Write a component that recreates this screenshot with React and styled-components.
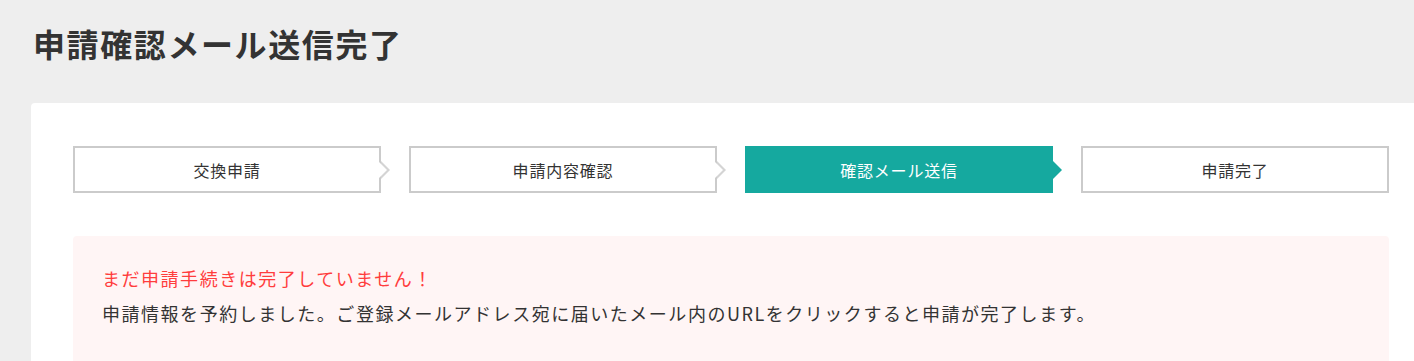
import React from 'react';
import styled, { createGlobalStyle } from 'styled-components';

const GlobalStyle = createGlobalStyle`
  html, body {
    margin: 0;
    padding: 0;
    background: #eeeeee;
    overflow: hidden;
  }

  body {
    font-family: 'Noto Sans CJK JP', 'Noto Sans', sans-serif;
    color: #333;
  }
`;

const StyledPage = styled.div`
  width: 1500px;
`;

const StyledTitle = styled.h1`
  margin: 0;
  padding: 23px 0 0 33px;
  font-size: 32px;
  line-height: 40px;
  font-weight: 700;
  letter-spacing: 0.05em;
  color: #333;
`;

const StyledCard = styled.section`
  box-sizing: border-box;
  width: 1400px;
  margin: 40px 0 0 31px;
  padding: 43px 42px 40px;
  background: #fff;
  border-radius: 4px;
`;

const StyledSteps = styled.ol`
  display: grid;
  grid-template-columns: repeat(4, 308px);
  grid-gap: 28px;
  margin: 0;
  padding: 0;
  list-style: none;
`;

const StyledStep = styled.li`
  position: relative;
  box-sizing: border-box;
  height: 47px;
  display: flex;
  align-items: center;
  justify-content: center;
  font-size: 16px;
  letter-spacing: 0.05em;
  color: ${({ active }) => (active ? '#fff' : '#333')};
  background: ${({ active }) => (active ? '#15a99f' : '#fff')};
  border: 2px solid ${({ active }) => (active ? '#15a99f' : '#cbcbcb')};

  &:before,
  &:after {
    content: '';
    position: absolute;
    top: 50%;
    width: 0;
    height: 0;
    border-style: solid;
  }

  &:before {
    right: -11px;
    margin-top: -9px;
    border-width: 9px 0 9px 9px;
    border-color: transparent transparent transparent
      ${({ active }) => (active ? '#15a99f' : '#d4d4d4')};
  }

  &:after {
    right: -8px;
    margin-top: -8px;
    border-width: 8px 0 8px 8px;
    border-color: transparent transparent transparent
      ${({ active }) => (active ? '#15a99f' : '#fff')};
  }

  &:last-child:before,
  &:last-child:after {
    display: none;
  }
`;

const StyledNotice = styled.div`
  margin-top: 43px;
  padding: 25px 29px 36px;
  background: #fff5f5;
  border-radius: 4px;
  font-size: 18px;
  line-height: 35px;
  letter-spacing: 0.085em;

  p {
    margin: 0;
  }

  .warn {
    color: #ff3d3d;
  }
`;

const App = () => {
  const steps = ['交換申請', '申請内容確認', '確認メール送信', '申請完了'];
  const current = 2;

  return (
    <StyledPage>
      <GlobalStyle />
      <StyledTitle>申請確認メール送信完了</StyledTitle>

      <StyledCard>
        <StyledSteps>
          {steps.map((step, i) => (
            <StyledStep key={i} active={i === current}>
              {step}
            </StyledStep>
          ))}
        </StyledSteps>

        <StyledNotice>
          <p className="warn">まだ申請手続きは完了していません！</p>
          <p>
            申請情報を予約しました。ご登録メールアドレス宛に届いたメール内のURLをクリックすると申請が完了します。
          </p>
        </StyledNotice>
      </StyledCard>
    </StyledPage>
  );
};

export default App;
